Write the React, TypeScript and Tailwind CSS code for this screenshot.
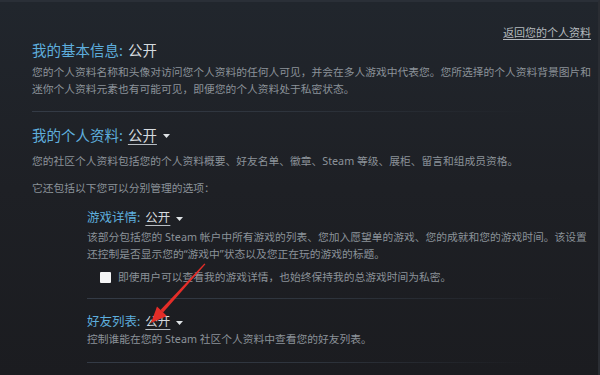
import React from "react";

const font = { fontFamily: '"Noto Sans", "Noto Sans CJK SC", sans-serif' };

function Caret() {
  return (
    <svg width="7" height="4" viewBox="0 0 7 4" className="ml-[6px] mt-[2px]">
      <polygon points="0,0 7,0 3.5,4" fill="#dfe3e6" />
    </svg>
  );
}

function Divider({ className = "" }: { className?: string }) {
  return <div className={`h-px bg-gradient-to-r from-[#343b46] via-[#2e343d] to-transparent ${className}`} />;
}

// Section title: blue label plus the current privacy value
function Title({ label, value, dropdown, size }: { label: string; value: string; dropdown?: boolean; size: "lg" | "sm" }) {
  return (
    <div className={`flex items-center ${size === "lg" ? "text-[14.5px] leading-[20px]" : "text-[12.5px] leading-[18px]"}`}>
      <span className="text-[#5eaedd]">{label}</span>
      <span className={`ml-[5px] text-[#d5dadf] ${dropdown ? "underline underline-offset-[3px] decoration-[#b8bec4]" : ""}`}>{value}</span>
      {dropdown && <Caret />}
    </div>
  );
}

export default function App() {
  return (
    <div
      style={font}
      className="relative w-[600px] h-[375px] overflow-hidden bg-gradient-to-b from-[#21262d] via-[#1e2025] to-[#1b1c20] border-t-2 border-t-[#2a2f37] border-r-2 border-r-[#2a2d33]"
    >
      <div className="pl-[32px] pr-[7px] pt-[24px]">
        <div className="flex justify-end">
          <a className="text-[11px] leading-[14px] text-[#b4b9be] underline underline-offset-2">返回您的个人资料</a>
        </div>

        <Title label="我的基本信息:" value="公开" size="lg" />
        <p className="mt-[4px] text-[10.75px] leading-[17px] text-[#8b9299] whitespace-nowrap">
          您的个人资料名称和头像对访问您个人资料的任何人可见，并会在多人游戏中代表您。您所选择的个人资料背景图片和
          <br />
          迷你个人资料元素也有可能可见，即便您的个人资料处于私密状态。
        </p>
        <Divider className="mt-[13px] mr-[60px]" />

        <div className="mt-[13px]">
          <Title label="我的个人资料:" value="公开" dropdown size="lg" />
        </div>
        <p className="mt-[8px] text-[10.75px] leading-[17px] text-[#8b9299] whitespace-nowrap">
          您的社区个人资料包括您的个人资料概要、好友名单、徽章、Steam 等级、展柜、留言和组成员资格。
        </p>
        <p className="mt-[10px] text-[10.75px] leading-[17px] text-[#8b9299]">它还包括以下您可以分别管理的选项：</p>

        <div className="pl-[55px]">
          <div className="mt-[12px]">
            <Title label="游戏详情:" value="公开" dropdown size="sm" />
          </div>
          <p className="mt-[2px] text-[10.75px] leading-[17px] text-[#8b9299] whitespace-nowrap">
            该部分包括您的 Steam 帐户中所有游戏的列表、您加入愿望单的游戏、您的成就和您的游戏时间。该设置
            <br />
            还控制是否显示您的“游戏中”状态以及您正在玩的游戏的标题。
          </p>
          <label className="mt-[6px] flex items-center pl-[13px] text-[10.75px] leading-[17px] text-[#8b9299]">
            <span className="w-[11px] h-[11px] rounded-[1px] bg-[#f4f5f6]" />
            <span className="ml-[7px]">即使用户可以查看我的游戏详情，也始终保持我的总游戏时间为私密。</span>
          </label>
          <Divider className="mt-[12px] mr-[30px]" />

          <div className="mt-[14px]">
            <Title label="好友列表:" value="公开" dropdown size="sm" />
          </div>
          <p className="text-[10.75px] leading-[17px] text-[#8b9299] whitespace-nowrap">
            控制谁能在您的 Steam 社区个人资料中查看您的好友列表。
          </p>
          <Divider className="mt-[14px] mr-[60px]" />
        </div>
      </div>

      {/* red annotation arrow */}
      <svg className="absolute left-0 top-0 pointer-events-none" width="600" height="375" viewBox="0 0 600 375">
        <polygon points="205.4,262.3 204.4,261.6 160.5,308.0 163.1,310.4" fill="#e42d28" />
        <polygon points="151,321 166.9,314.0 157.0,304.6" fill="#e42d28" />
      </svg>
    </div>
  );
}
